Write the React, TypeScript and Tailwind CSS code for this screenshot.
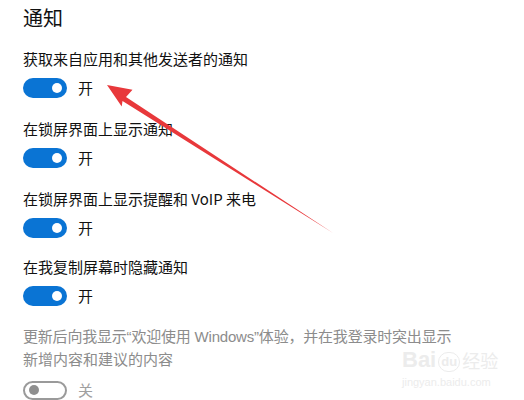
import React from "react";

const font = { fontFamily: '"Microsoft YaHei", "Noto Sans CJK SC", "Noto Sans", sans-serif' };
const latin = { fontFamily: '"Liberation Sans", sans-serif' };

function ToggleOn() {
  return (
    <div className="flex items-center h-[20px]">
      <div className="w-[44px] h-[20px] rounded-full bg-[#0a74d4] flex items-center justify-end pr-[5px]">
        <div className="w-[10px] h-[10px] rounded-full bg-white" />
      </div>
      <span className="ml-[11px] text-[15px] leading-[20px] text-[#111]">开</span>
    </div>
  );
}

function ToggleOff() {
  return (
    <div className="flex items-center h-[20px]">
      <div className="w-[44px] h-[19px] rounded-full border-2 border-[#9a9a9a] flex items-center pl-[4px] box-border">
        <div className="w-[10px] h-[10px] rounded-full bg-[#8f8f8f]" />
      </div>
      <span className="ml-[11px] text-[15px] leading-[20px] text-[#a0a0a0]">关</span>
    </div>
  );
}

function Row({ label, className }: { label: string; className?: string }) {
  return (
    <div className={"flex flex-col " + (className ?? "mb-[21px]")}>
      <div className="text-[15px] leading-[20px] text-[#111] mb-[9px]">{label}</div>
      <ToggleOn />
    </div>
  );
}

export default function App() {
  return (
    <div className="relative w-[524px] h-[400px] bg-white overflow-hidden" style={font}>
      <div className="absolute left-[402px] top-[348px] flex flex-col items-start text-[#ececec] select-none">
        <div className="flex items-end text-[22px] leading-[24px] font-bold" style={latin}>
          <span>Bai</span>
          <span className="text-[13px] leading-[18px] mx-[2px] px-[2px] rounded-full border border-[#ececec]">du</span>
          <span className="text-[18px] font-normal" style={font}>经验</span>
        </div>
        <div className="text-[11px] leading-[12px] mt-[4px]" style={latin}>jingyan.baidu.com</div>
      </div>

      <div className="relative flex flex-col pl-[23px] pt-[4px]">
        <div className="text-[20px] leading-[28px] text-[#111] mb-[17px]">通知</div>
        <Row label="获取来自应用和其他发送者的通知" />
        <Row label="在锁屏界面上显示通知" />
        <Row label="在锁屏界面上显示提醒和 VoIP 来电" className="mb-[19px]" />
        <Row label="在我复制屏幕时隐藏通知" className="mb-[19px]" />
        <div className="flex flex-col text-[15px] leading-[22px] text-[#8c8c8c] mb-[10px]">
          <div className="tracking-[-0.2px] whitespace-nowrap">
            更新后向我显示<span style={latin}>“</span>欢迎使用<span style={latin}> Windows”</span>体验，并在我登录时突出显示
          </div>
          <div>新增内容和建议的内容</div>
        </div>
        <ToggleOff />
      </div>

      <svg className="absolute left-0 top-0" width="524" height="400" viewBox="0 0 524 400">
        <polygon
          points="107,85 132.5,89.7 126,97 333,233 122.5,101 121.7,106.5"
          fill="#e8383b"
        />
      </svg>
    </div>
  );
}
